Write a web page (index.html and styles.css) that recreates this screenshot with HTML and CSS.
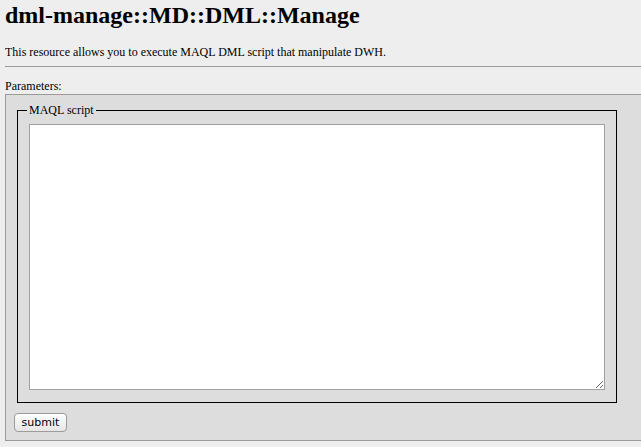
FILE: index.html
```html
<!DOCTYPE html>
<html>
<head>
<meta charset="utf-8">
<title>dml-manage::MD::DML::Manage</title>
<link rel="stylesheet" href="styles.css">
</head>
<body>
<h1 class="title">dml-manage::MD::DML::Manage</h1>
<p class="desc">This resource allows you to execute MAQL DML script that manipulate DWH.</p>
<hr class="rule">
<div class="params-label">Parameters:</div>
<form class="params">
  <fieldset class="field">
    <legend class="field-legend">MAQL script</legend>
    <textarea class="script"></textarea>
  </fieldset>
  <button type="button" class="submit">submit</button>
</form>
</body>
</html>
```
FILE: styles.css
```css
html {
  overflow: hidden;
  background: #eeeeee;
}
body {
  margin: 0 0 0 5px;
  padding: 0;
  background: #eeeeee;
  color: #000;
  font-family: "Liberation Serif", "Times New Roman", serif;
  font-size: 12px;
  line-height: 14px;
}
.title {
  margin: 1px 0 0;
  font-size: 24px;
  line-height: 28px;
  font-weight: bold;
}
.desc {
  margin: 16px 0 0;
}
.rule {
  margin: 7px 0 0;
  border: 0;
  border-top: 1px solid #9a9a9a;
  height: 0;
}
.params-label {
  margin-top: 12px;
}
.params {
  margin: 1px -12px 0 0;
  border: 1px solid #9a9a9a;
  background: #dddddd;
  padding: 8px 0 8px 8px;
}
.field {
  box-sizing: border-box;
  width: 600px;
  margin: 0 0 0 3px;
  padding: 0 11px 12px 11px;
  border: 1px solid #000;
  min-inline-size: 0;
}
.field-legend {
  margin-left: -2px;
  padding: 0 2px;
  line-height: 15px;
}
.script {
  display: block;
  box-sizing: border-box;
  width: 576px;
  height: 266px;
  margin: 6px 0 0;
  padding: 2px;
  border: 1px solid #a0a0a0;
  background: #fff;
  font-family: "Liberation Mono", monospace;
  font-size: 12px;
}
.submit {
  display: block;
  box-sizing: border-box;
  width: 53px;
  height: 19px;
  margin: 10px 0 0;
  padding: 0;
  border: 1px solid #9c9c9c;
  border-radius: 4px;
  background: linear-gradient(#ffffff, #f2f2f2 50%, #e6e6e6);
  font-family: "DejaVu Sans", sans-serif;
  font-size: 11px;
  line-height: 17px;
  color: #000;
  text-align: center;
}
```
